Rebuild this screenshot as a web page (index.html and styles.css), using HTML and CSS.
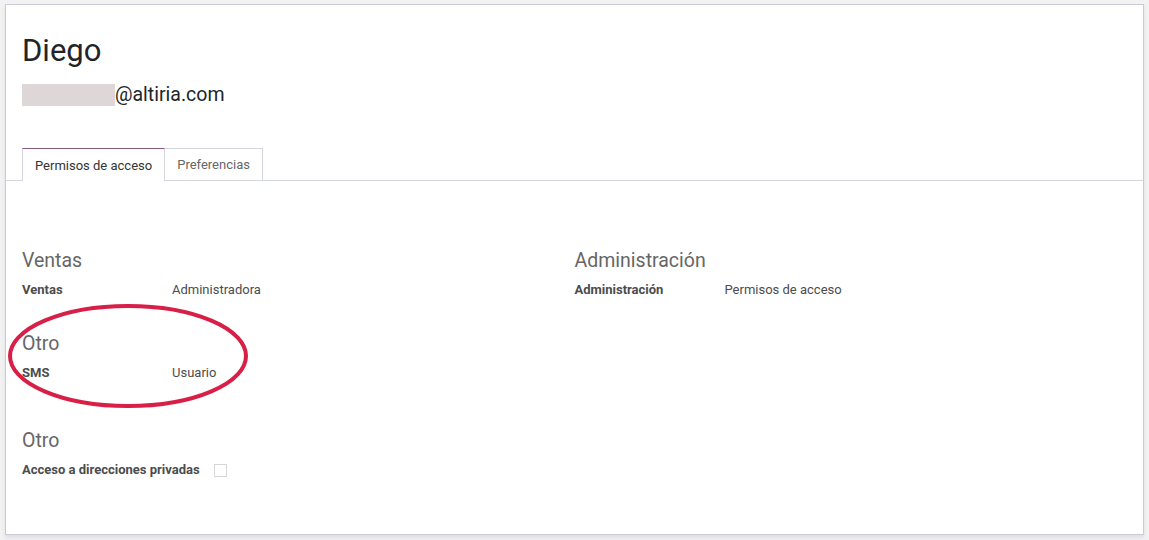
FILE: index.html
```html
<!DOCTYPE html>
<html lang="es">
<head>
<meta charset="utf-8">
<title>Diego</title>
<link rel="stylesheet" href="styles.css">
</head>
<body>
<div class="sheet">
  <div class="head">
    <h1 class="name">Diego</h1>
    <div class="email"><span class="redact"></span>@altiria.com</div>
  </div>
  <div class="tabs">
    <div class="tab active">Permisos de acceso</div>
    <div class="tab">Preferencias</div>
  </div>
  <div class="content">
    <div class="cols">
      <div class="col">
        <div class="group">
          <div class="gtitle">Ventas</div>
          <div class="row"><span class="lbl">Ventas</span><span class="val">Administradora</span></div>
        </div>
        <div class="group">
          <div class="gtitle">Otro</div>
          <div class="row"><span class="lbl">SMS</span><span class="val">Usuario</span></div>
        </div>
      </div>
      <div class="col">
        <div class="group">
          <div class="gtitle">Administración</div>
          <div class="row"><span class="lbl">Administración</span><span class="val">Permisos de acceso</span></div>
        </div>
      </div>
    </div>
    <div class="group">
      <div class="gtitle">Otro</div>
      <div class="row"><span class="lbl auto">Acceso a direcciones privadas</span><span class="check"></span></div>
    </div>
  </div>
  <svg class="circle" width="244" height="108" viewBox="0 0 244 108">
    <ellipse cx="122" cy="54" rx="118" ry="50" fill="none" stroke="#d81f48" stroke-width="4"/>
  </svg>
</div>
</body>
</html>
```
FILE: styles.css
```css
html, body {
  margin: 0;
  padding: 0;
}
body {
  background: #f2f2f2;
  font-family: Roboto, "Noto Sans", sans-serif;
  color: #4c4c4c;
  height: 540px;
  overflow: hidden;
}
.sheet {
  position: relative;
  margin: 4px 0 0 5px;
  width: 1139px;
  height: 531px;
  box-sizing: border-box;
  background: #fff;
  border: 1px solid #c9ccd6;
  box-shadow: 0 3px 4px rgba(0,0,0,0.08);
}
.head {
  padding: 27px 16px 0;
  height: 116px;
  box-sizing: border-box;
}
.name {
  margin: 0;
  font-weight: 400;
  font-size: 31px;
  line-height: 38px;
  color: #212529;
}
.email {
  margin-top: 13px;
  display: flex;
  align-items: center;
  font-size: 19.5px;
  line-height: 24px;
  color: #212529;
}
.redact {
  display: inline-block;
  width: 93px;
  height: 22px;
  background: #ddd7d7;
}
.tabs {
  margin-top: 27px;
  padding-left: 16px;
  display: flex;
  border-bottom: 1px solid #d3d6dc;
  height: 32px;
}
.tab {
  height: 32px;
  box-sizing: border-box;
  padding: 0 12px;
  display: flex;
  align-items: center;
  font-size: 13px;
  color: #666;
  border: 1px solid #d3d6dc;
  border-bottom: none;
  margin-bottom: -1px;
  background: #fff;
}
.tab.active {
  color: #333;
  border-top: 1px solid #875a7b;
  height: 33px;
}
.tab + .tab {
  border-left: none;
}
.content {
  padding: 68px 16px 0;
}
.cols {
  display: flex;
  margin-bottom: 47px;
}
.col {
  width: 553px;
}
.group {
  margin-bottom: 33px;
}
.cols .col .group:last-child {
  margin-bottom: 0;
}
.gtitle {
  font-size: 19.5px;
  line-height: 24px;
  color: #666;
}
.row {
  display: flex;
  align-items: center;
  font-size: 13px;
  line-height: 18px;
  margin-top: 8px;
  min-height: 18px;
}
.lbl {
  font-weight: 700;
  width: 150px;
  color: #4c4c4c;
}
.lbl.auto {
  width: auto;
  margin-right: 14px;
}
.val {
  color: #4c4c4c;
}
.check {
  width: 13px;
  height: 13px;
  box-sizing: border-box;
  border: 1px solid #d6d6d6;
  background: #fff;
}
.circle {
  position: absolute;
  left: 0;
  top: 297px;
}
```
